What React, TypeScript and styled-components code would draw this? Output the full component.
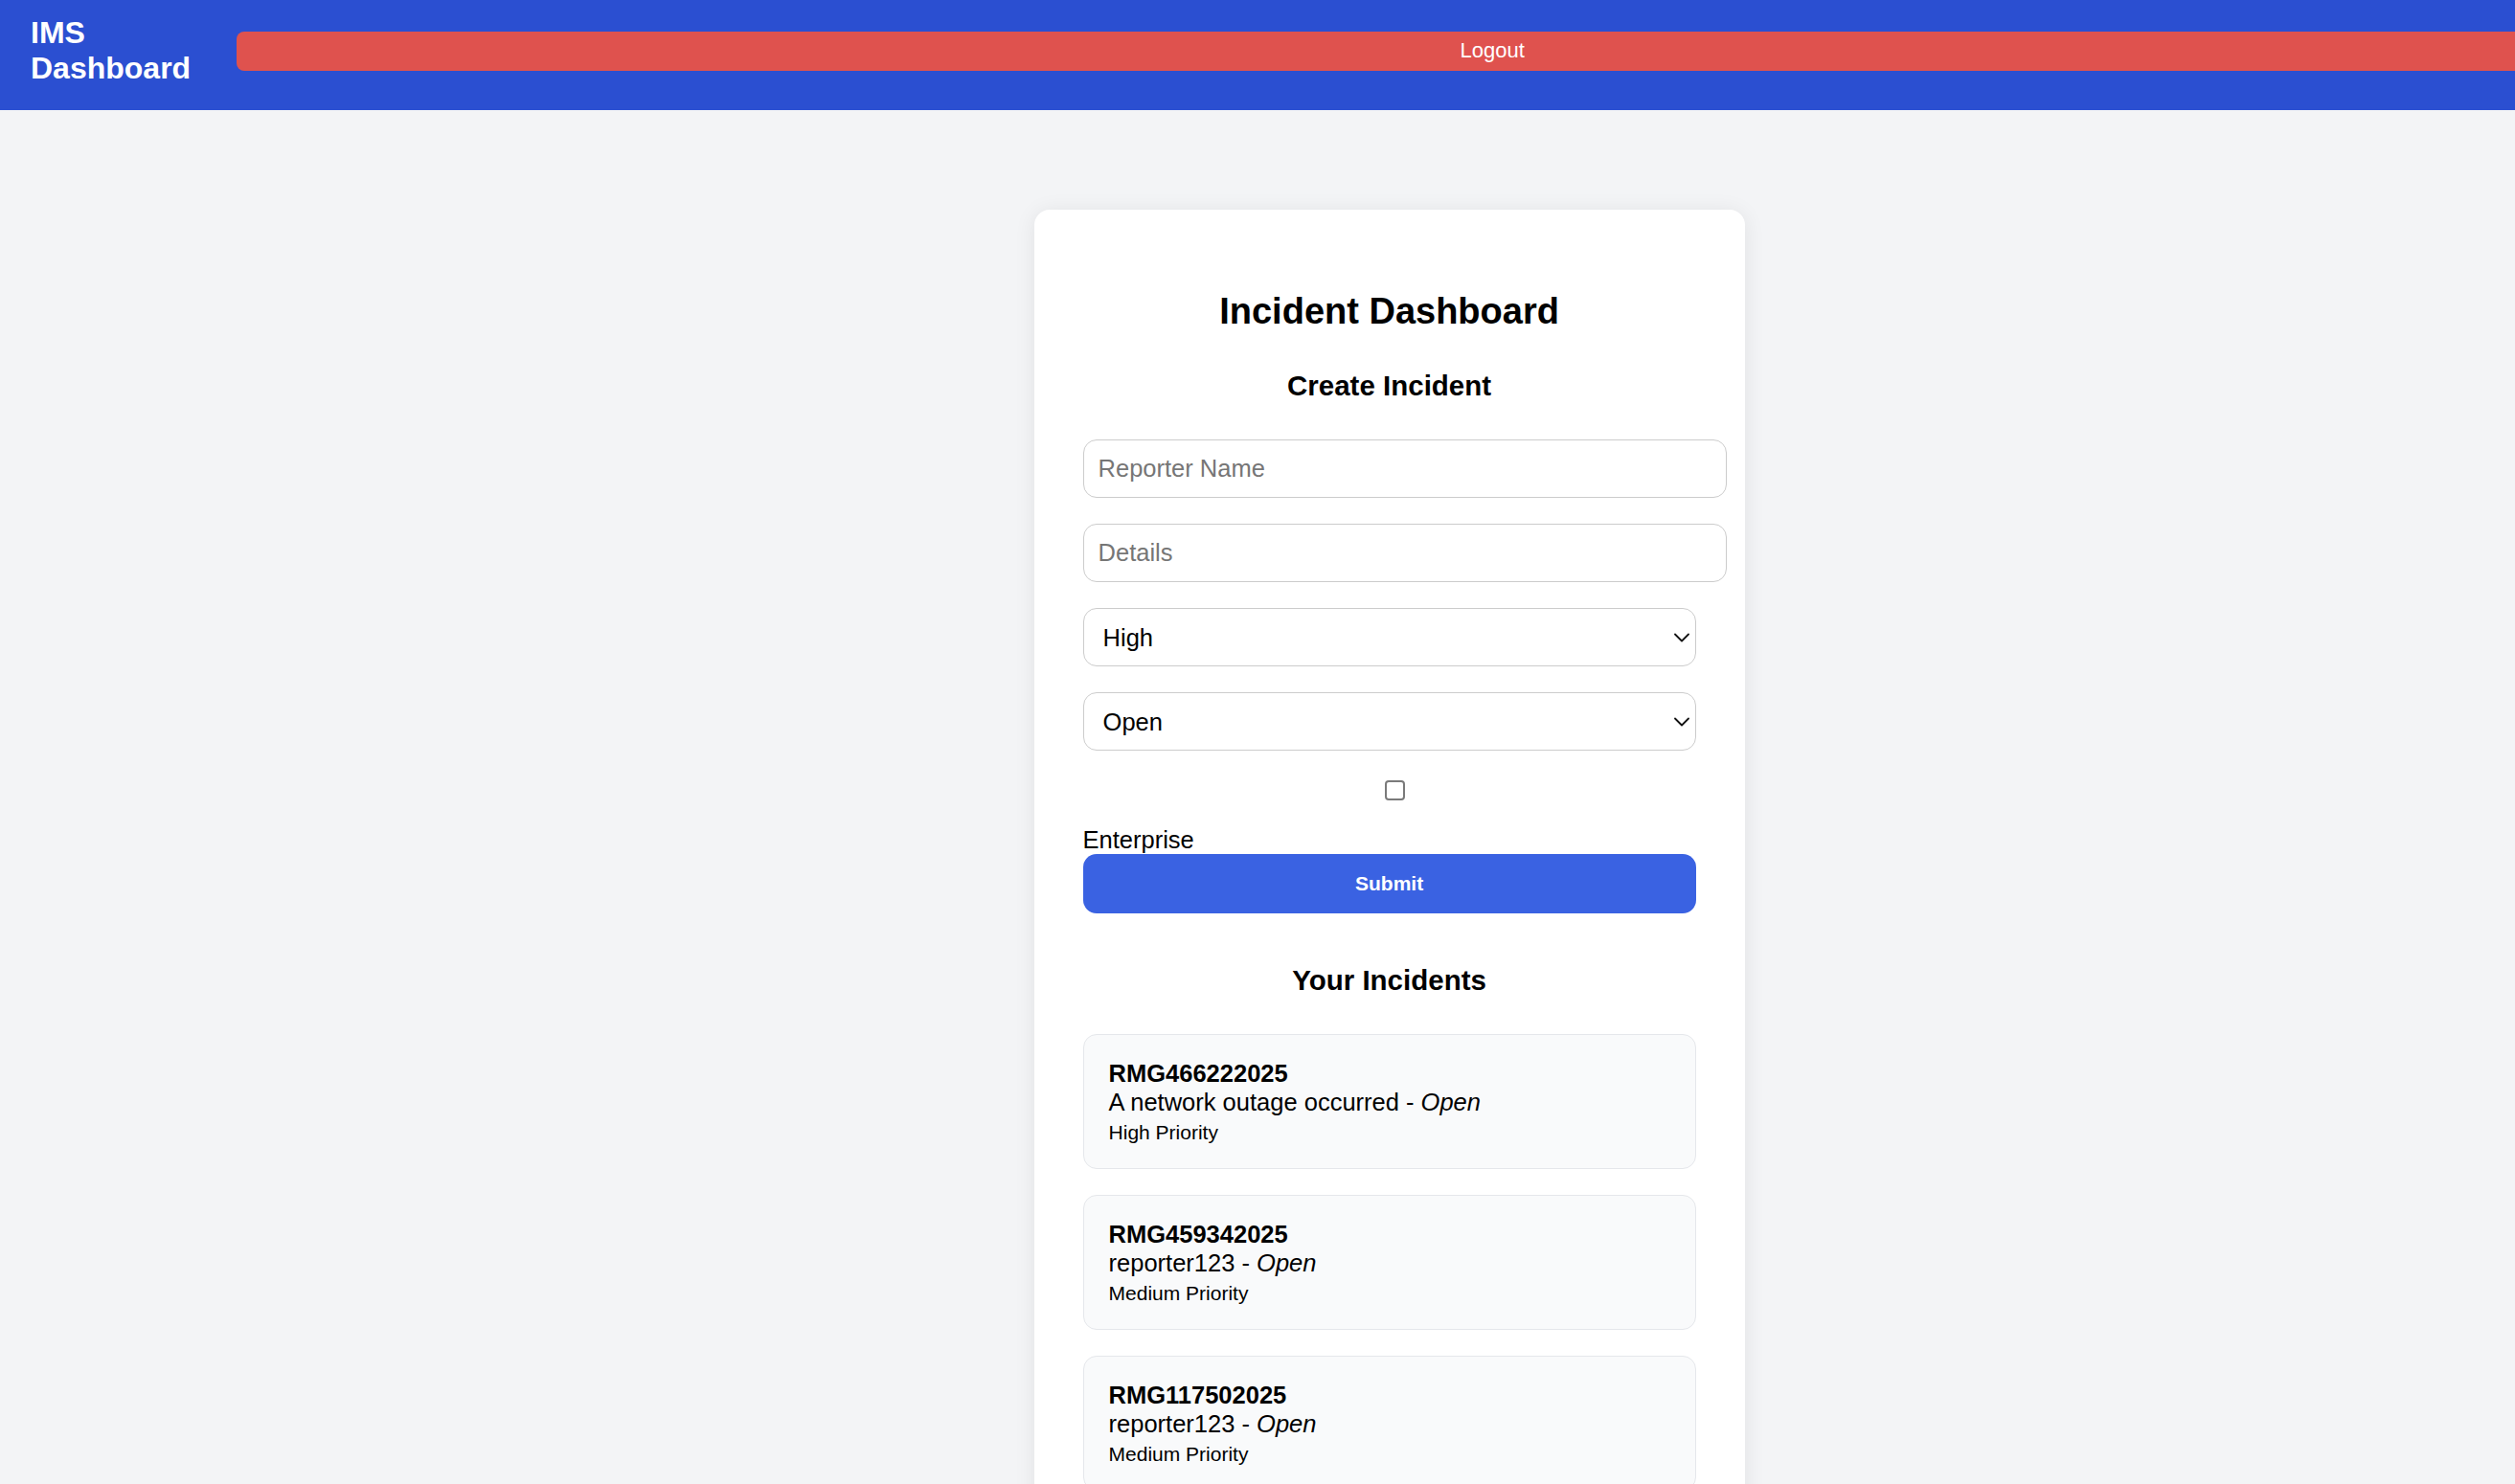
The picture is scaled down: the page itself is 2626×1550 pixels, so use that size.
import React from "react";
import styled, { createGlobalStyle } from "styled-components";

const GlobalStyle = createGlobalStyle`
  html, body {
    margin: 0;
    padding: 0;
    background: #f3f4f6;
    overflow-x: hidden;
    font-family: "Liberation Sans", Arial, Helvetica, sans-serif;
    color: #000;
  }
`;

const Page = styled.div`
  display: flex;
  flex-direction: column;
  width: max-content;
  min-width: 100%;
  min-height: 100vh;
`;

const Header = styled.header`
  display: flex;
  align-items: center;
  gap: 48px;
  padding: 16px 32px 25px;
  background: #2b4fd1;
`;

const Brand = styled.h1`
  margin: 0;
  width: min-content;
  font-size: 32px;
  line-height: 37px;
  font-weight: 700;
  color: #ffffff;
`;

const LogoutButton = styled.button`
  flex: 0 0 auto;
  width: calc(100vw - 4px);
  height: 41px;
  border: none;
  border-radius: 8px;
  background: #df524e;
  color: #ffffff;
  font-family: "Liberation Sans", Arial, sans-serif;
  font-size: 22px;
  cursor: pointer;
`;

const Main = styled.main`
  display: flex;
  justify-content: center;
  align-items: flex-start;
  padding-top: 104px;
`;

const Card = styled.section`
  box-sizing: border-box;
  width: 742px;
  padding: 50px 51px;
  background: #ffffff;
  border-radius: 16px;
  box-shadow: 0 2px 22px rgba(0, 0, 0, 0.08);
`;

const Title = styled.h2`
  margin: 35px 0 0;
  font-size: 38px;
  font-weight: 700;
  text-align: center;
`;

const SectionTitle = styled.h3<{ $top: number; $bottom: number }>`
  margin: ${(p) => p.$top}px 0 ${(p) => p.$bottom}px;
  font-size: 29.5px;
  font-weight: 700;
  text-align: center;
`;

const Form = styled.form`
  display: flex;
  flex-direction: column;
`;

const TextInput = styled.input`
  box-sizing: content-box;
  width: 100%;
  height: 59px;
  padding: 0 15px;
  margin: 0 0 27px;
  border: 1px solid #cccccc;
  border-radius: 14px;
  background: #ffffff;
  font-family: "Liberation Sans", Arial, sans-serif;
  font-size: 25.5px;
  color: #000;
  outline: none;

  &::placeholder {
    color: #767676;
  }
`;

const SelectWrap = styled.div`
  position: relative;
  margin: 0 0 27px;
`;

const Select = styled.select`
  box-sizing: border-box;
  width: 100%;
  height: 61px;
  padding: 0 40px 0 20px;
  border: 1px solid #cccccc;
  border-radius: 14px;
  background: #ffffff;
  appearance: none;
  -webkit-appearance: none;
  font-family: "Liberation Sans", Arial, sans-serif;
  font-size: 25.5px;
  color: #000;
  outline: none;
`;

const Chevron = styled.svg`
  position: absolute;
  right: 7px;
  top: 50%;
  width: 16px;
  height: 10px;
  margin-top: -5px;
  pointer-events: none;
`;

const CheckRow = styled.div`
  display: flex;
  justify-content: center;
  padding: 4px 0 27px 11px;
`;

const Checkbox = styled.input`
  appearance: none;
  -webkit-appearance: none;
  box-sizing: border-box;
  width: 21px;
  height: 21px;
  margin: 0;
  border: 2px solid #7a7a7a;
  border-radius: 4px;
  background: #ffffff;
`;

const CheckLabel = styled.label`
  display: block;
  font-size: 25.5px;
  line-height: 29px;
`;

const SubmitButton = styled.button`
  width: 100%;
  height: 62px;
  border: none;
  border-radius: 14px;
  background: #3a62e2;
  color: #ffffff;
  font-family: "Liberation Sans", Arial, sans-serif;
  font-size: 21px;
  font-weight: 700;
  cursor: pointer;
`;

const IncidentList = styled.div`
  display: flex;
  flex-direction: column;
  gap: 27px;
`;

const IncidentCard = styled.div`
  padding: 25px 26px 24px;
  border: 1px solid #e5e7eb;
  border-radius: 14px;
  background: #f9fafb;
`;

const IncidentLine = styled.div<{ $bold?: boolean }>`
  font-size: 25.5px;
  line-height: 30px;
  font-weight: ${(p) => (p.$bold ? 700 : 400)};
`;

const Status = styled.em`
  font-style: italic;
`;

const Priority = styled.span`
  font-size: 21px;
  line-height: 1;
`;

type Incident = {
  id: string;
  text: string;
  status: string;
  priority: string;
};

const incidents: Incident[] = [
  { id: "RMG466222025", text: "A network outage occurred", status: "Open", priority: "High" },
  { id: "RMG459342025", text: "reporter123", status: "Open", priority: "Medium" },
  { id: "RMG117502025", text: "reporter123", status: "Open", priority: "Medium" },
];

const ChevronIcon = () => (
  <Chevron viewBox="0 0 16 10" fill="none">
    <path d="M1 1.5 L8 8.5 L15 1.5" stroke="#111" strokeWidth="1.8" strokeLinecap="round" strokeLinejoin="round" />
  </Chevron>
);

export default function App() {
  return (
    <>
      <GlobalStyle />
      <Page>
        <Header>
          <Brand>IMS Dashboard</Brand>
          <LogoutButton type="button">Logout</LogoutButton>
        </Header>
        <Main>
          <Card>
            <Title>Incident Dashboard</Title>
            <SectionTitle $top={39} $bottom={39}>Create Incident</SectionTitle>
            <Form onSubmit={(e) => e.preventDefault()}>
              <TextInput type="text" placeholder="Reporter Name" />
              <TextInput type="text" placeholder="Details" />
              <SelectWrap>
                <Select defaultValue="High">
                  <option value="High">High</option>
                  <option value="Medium">Medium</option>
                  <option value="Low">Low</option>
                </Select>
                <ChevronIcon />
              </SelectWrap>
              <SelectWrap>
                <Select defaultValue="Open">
                  <option value="Open">Open</option>
                  <option value="In progress">In progress</option>
                  <option value="Closed">Closed</option>
                </Select>
                <ChevronIcon />
              </SelectWrap>
              <CheckRow>
                <Checkbox type="checkbox" id="enterprise" />
              </CheckRow>
              <CheckLabel htmlFor="enterprise">Enterprise</CheckLabel>
              <SubmitButton type="submit">Submit</SubmitButton>
            </Form>
            <SectionTitle $top={53} $bottom={39}>Your Incidents</SectionTitle>
            <IncidentList>
              {incidents.map((inc) => (
                <IncidentCard key={inc.id}>
                  <IncidentLine $bold>{inc.id}</IncidentLine>
                  <IncidentLine>
                    {inc.text} - <Status>{inc.status}</Status>
                  </IncidentLine>
                  <IncidentLine>
                    <Priority>{inc.priority} Priority</Priority>
                  </IncidentLine>
                </IncidentCard>
              ))}
            </IncidentList>
          </Card>
        </Main>
      </Page>
    </>
  );
}
